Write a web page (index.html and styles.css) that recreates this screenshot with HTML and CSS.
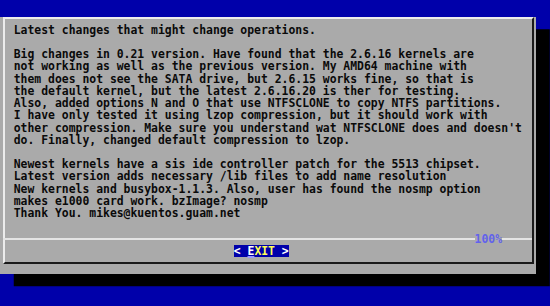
FILE: index.html
```html
<!DOCTYPE html>
<html lang="en">
<head>
  <meta charset="UTF-8" />
  <title>Latest changes</title>
  <link rel="stylesheet" href="styles.css">
</head>
<body>

  <!-- Dialog box -->
  <div class="dialog">
    <div class="frame">
      <div class="message">Latest changes that might change operations.

Big changes in 0.21 version. Have found that the 2.6.16 kernels are
not working as well as the previous version. My AMD64 machine with
them does not see the SATA drive, but 2.6.15 works fine, so that is
the default kernel, but the latest 2.6.16.20 is ther for testing.
Also, added options N and O that use NTFSCLONE to copy NTFS partitions.
I have only tested it using lzop compression, but it should work with
other compression. Make sure you understand wat NTFSCLONE does and doesn't
do. Finally, changed default compression to lzop.

Newest kernels have a sis ide controller patch for the 5513 chipset.
Latest version adds necessary /lib files to add name resolution
New kernels and busybox-1.1.3. Also, user has found the nosmp option
makes e1000 card work. bzImage? nosmp
Thank You. mikes@kuentos.guam.net</div>

      <!-- separator with scroll percent -->
      <div class="separator">
        <div class="line"></div>
        <span class="percent">100%</span>
        <div class="line short"></div>
      </div>

      <div class="buttons">
        <span class="button"><span class="arrow">&lt;</span> <span class="hotkey">E</span>XIT <span class="arrow">&gt;</span></span>
      </div>
    </div>
  </div>

</body>
</html>
```

FILE: styles.css
```css
* { margin: 0; padding: 0; box-sizing: border-box; }

body {
  --cw: 6.875px;
  --rh: 12.24px;
  background-color: #0000aa;
  width: 550px;
  height: 306px;
  overflow: hidden;
  padding-top: var(--rh);
  font-family: "DejaVu Sans Mono", "Liberation Mono", monospace;
  font-weight: bold;
  font-size: 11.42px;
  line-height: var(--rh);
}

.dialog {
  width: 536.25px;
  height: 257.04px;
  background-color: #aaaaaa;
  box-shadow: 13.75px 12.24px 0 #000;
}

.frame {
  margin: 5px 2.5px;
  height: 247.04px;
  border: 2px solid #ececec;
  border-right-color: #1a1a1a;
  border-bottom-color: #1a1a1a;
  display: flex;
  flex-direction: column;
}

.message {
  height: 213.32px;
  padding: 4.4px 0 0 9.25px;
  white-space: pre;
  color: #0a0a0a;
}

.separator {
  height: var(--rh);
  display: flex;
  align-items: center;
  margin-left: -2px;
}

.separator .line {
  flex: 1;
  height: 2px;
  background-color: #e4e4e4;
}

.separator .line.short {
  flex: none;
  width: 29.75px;
}

.percent {
  color: #6262ec;
  white-space: pre;
}

.buttons {
  height: var(--rh);
  padding-left: 229.25px;
  display: flex;
}

.button {
  width: 55px;
  background-color: #0000aa;
  color: #ffff55;
  white-space: pre;
}

.button .arrow {
  color: #ffffff;
}

.hotkey {
  color: #ffffff;
  text-decoration: underline;
  text-decoration-color: #9a9aff;
  text-decoration-thickness: 2px;
  text-underline-offset: 1px;
}
```
